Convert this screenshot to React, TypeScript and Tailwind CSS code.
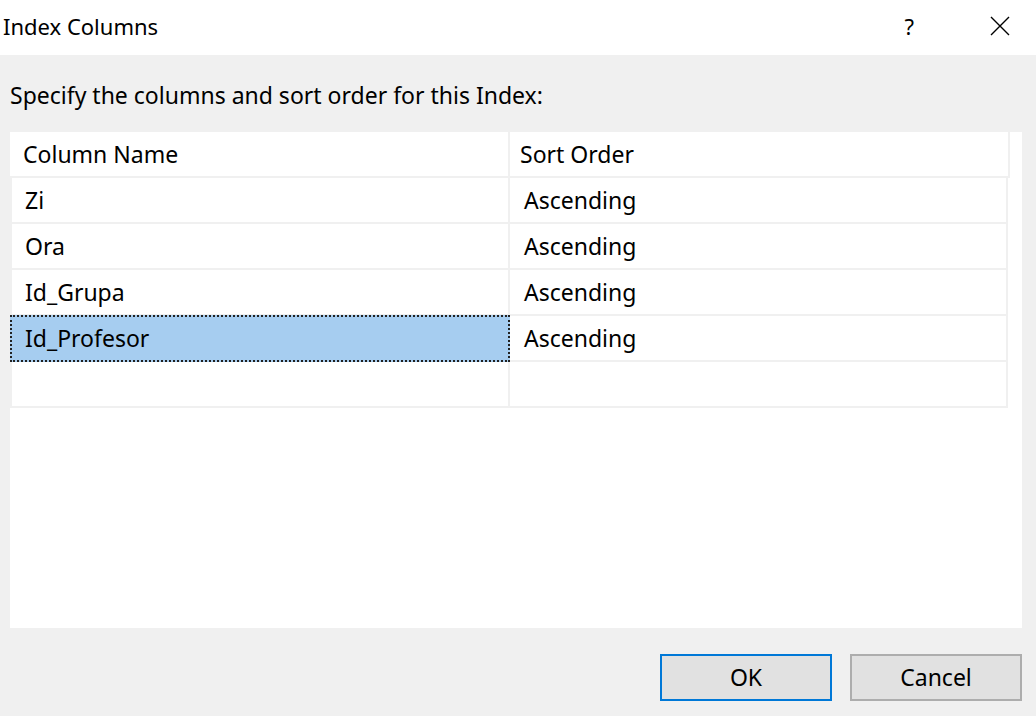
import React from "react";

const rows = ["Zi", "Ora", "Id_Grupa", "Id_Profesor", ""];

export default function App() {
  return (
    <div
      className="w-[1036px] h-[716px] bg-[#f0f0f0] flex flex-col text-black"
      style={{ fontFamily: '"Noto Sans", "Open Sans", sans-serif' }}
    >
      {/* title bar */}
      <div className="h-[55px] bg-white flex items-start pt-[15px]">
        <span className="pl-[3px] text-[22px] leading-none">Index Columns</span>
        <span className="ml-auto mr-[76px] text-[22px] leading-none">?</span>
        <svg width="20" height="20" viewBox="0 0 20 20" className="mr-[26px] mt-[1px]">
          <path d="M1 1 L19 19 M19 1 L1 19" stroke="#000" strokeWidth="1.4" fill="none" />
        </svg>
      </div>

      <div className="pl-[10px] pt-[29px] h-[77px] text-[23px] leading-none">
        Specify the columns and sort order for this Index:
      </div>

      {/* grid */}
      <div className="ml-[10px] w-[1012px] h-[496px] bg-white">
        <div className="flex w-[1000px] h-[46px] border-b-2 border-[#f0f0f0] text-[23px]">
          <div className="w-[500px] border-r-2 border-[#f0f0f0] flex items-center pl-[13px]">
            Column Name
          </div>
          <div className="flex-1 border-r-2 border-[#f0f0f0] flex items-center pl-[10px]">
            Sort Order
          </div>
        </div>
        <div className="w-[998px] border-l-2 border-[#f0f0f0] text-[23px]">
          {rows.map((name, i) => {
            const selected = name === "Id_Profesor";
            return (
              <div key={i} className="flex h-[46px] border-b-2 border-[#f0f0f0]">
                <div className="relative w-[498px] border-r-2 border-[#f0f0f0] flex items-center pl-[13px]">
                  {selected && (
                    <div className="absolute -left-[2px] -top-[1px] -right-[2px] -bottom-[2px] bg-[#a6cdf0] border-2 border-dotted border-[#222]" />
                  )}
                  <span className="relative">{name}</span>
                </div>
                <div className="flex-1 border-r-2 border-[#f0f0f0] flex items-center pl-[14px]">
                  {name ? "Ascending" : ""}
                </div>
              </div>
            );
          })}
        </div>
      </div>

      {/* buttons */}
      <div className="flex justify-end gap-[18px] pr-[14px] pt-[26px] text-[23px]">
        <button className="w-[172px] h-[47px] bg-[#e1e1e1] border-2 border-[#0078d7] flex items-center justify-center">
          OK
        </button>
        <button className="w-[172px] h-[47px] bg-[#e1e1e1] border-2 border-[#adadad] flex items-center justify-center">
          Cancel
        </button>
      </div>
    </div>
  );
}
